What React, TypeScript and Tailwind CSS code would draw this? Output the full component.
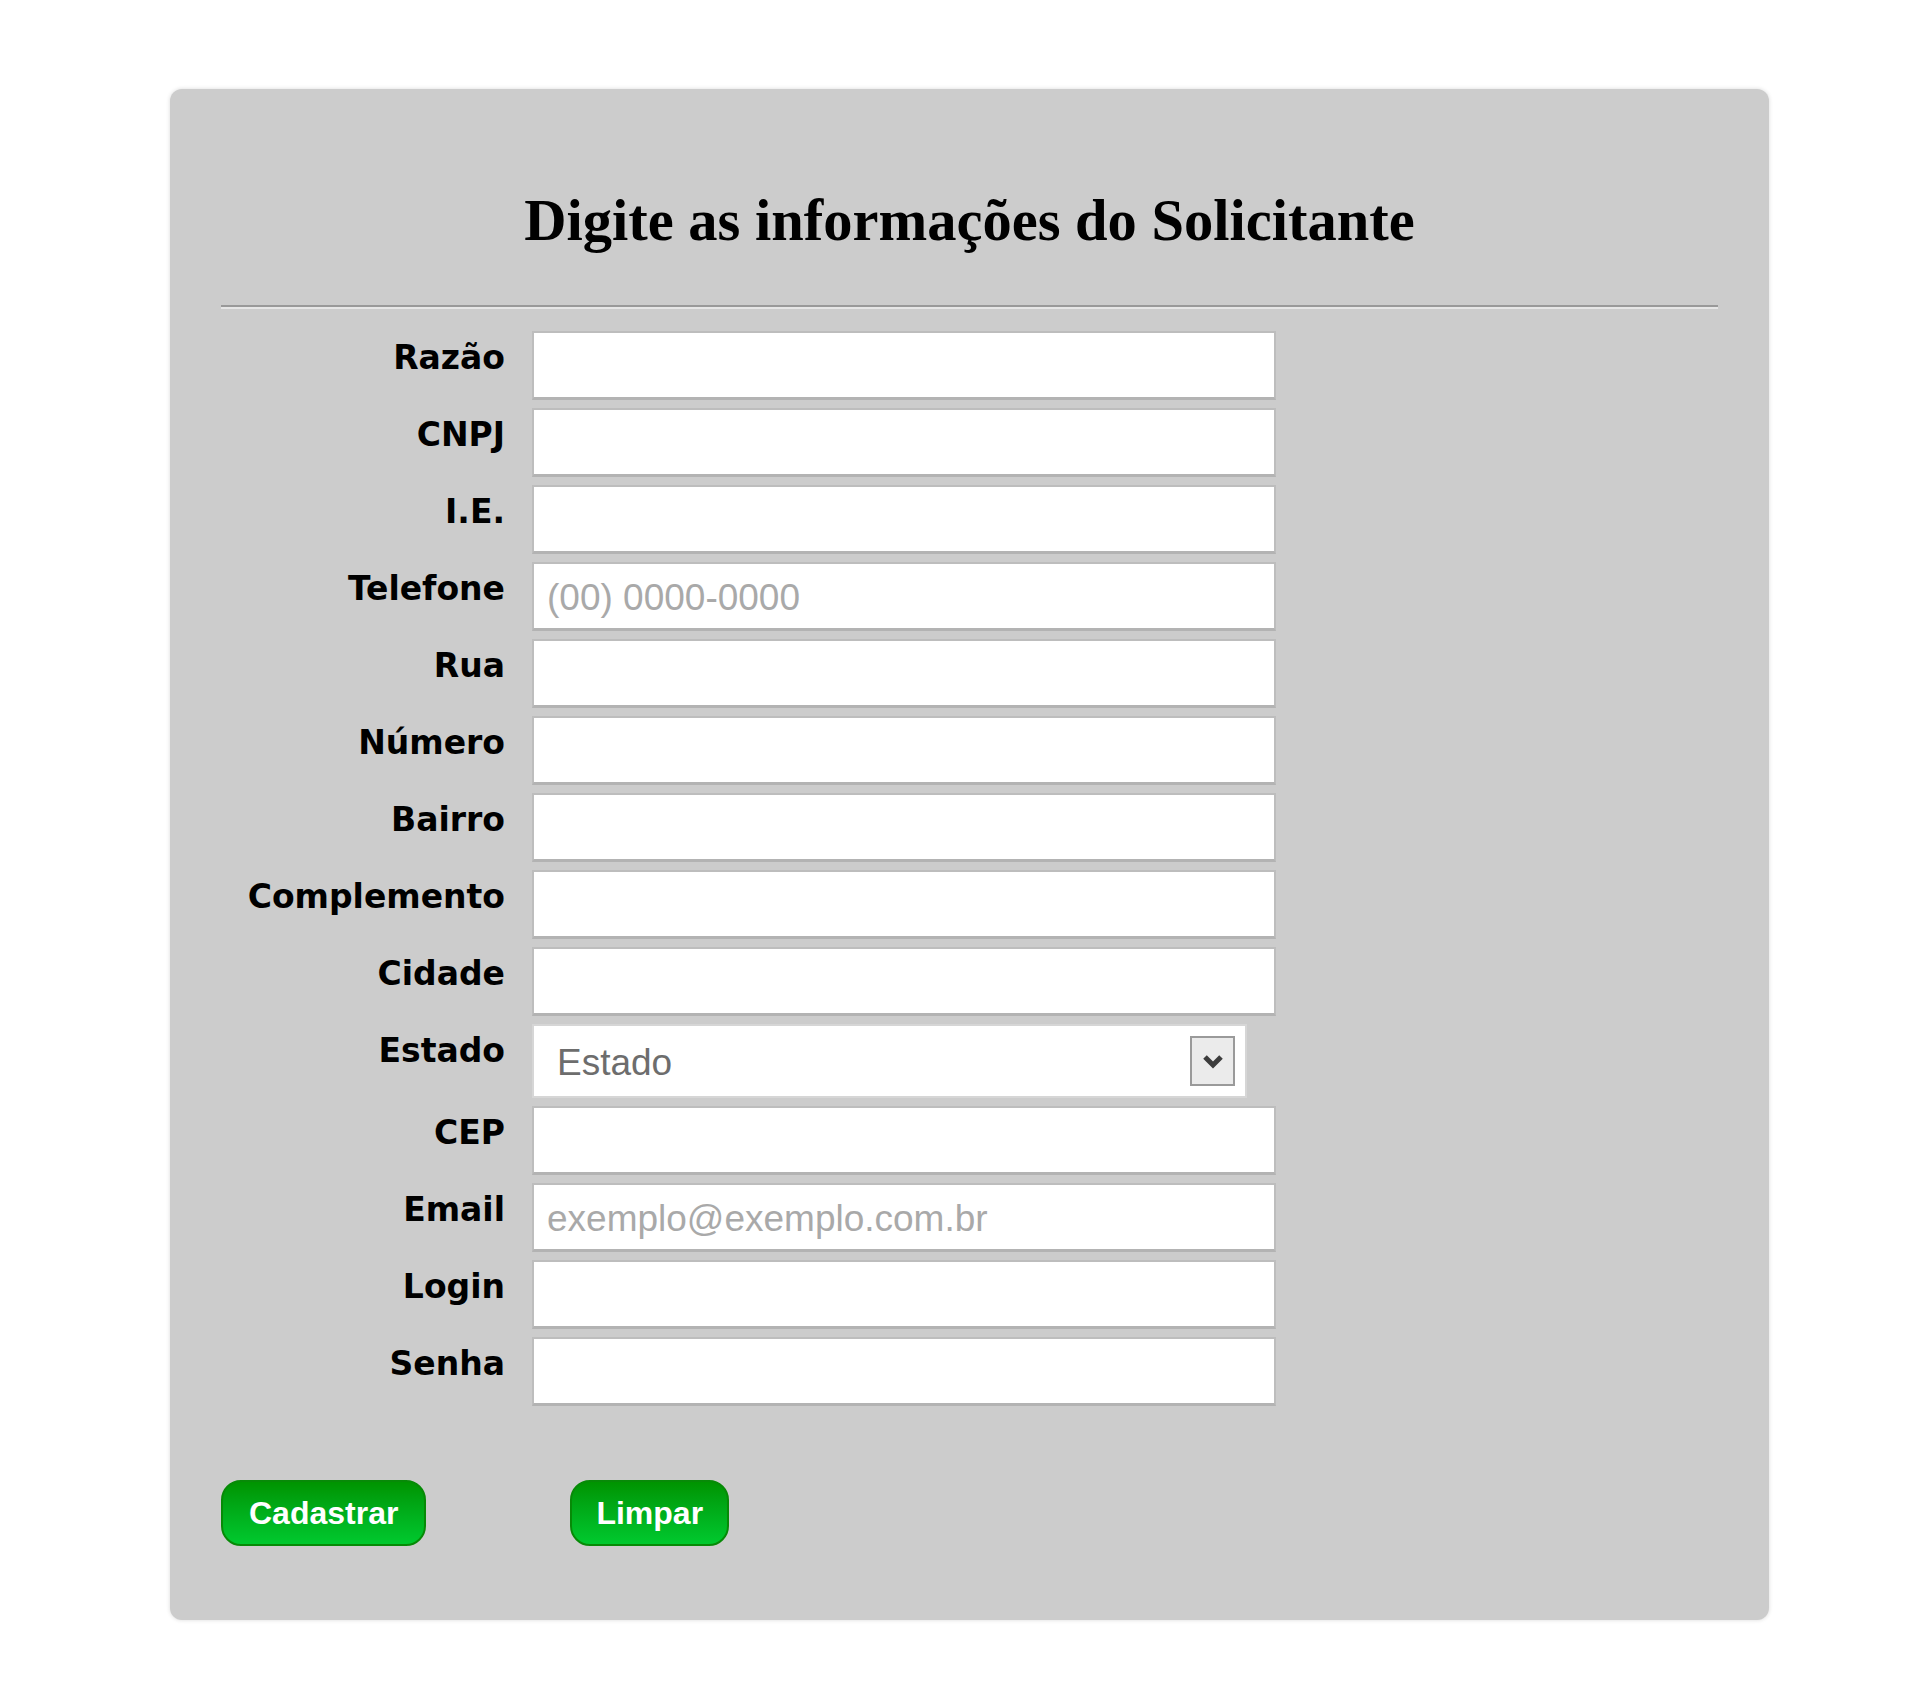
import type { ReactNode } from "react";

const campos = [
  { id: "razao", rotulo: "Razão" },
  { id: "cnpj", rotulo: "CNPJ" },
  { id: "ie", rotulo: "I.E." },
  { id: "telefone", rotulo: "Telefone", placeholder: "(00) 0000-0000" },
  { id: "rua", rotulo: "Rua" },
  { id: "numero", rotulo: "Número" },
  { id: "bairro", rotulo: "Bairro" },
  { id: "complemento", rotulo: "Complemento" },
  { id: "cidade", rotulo: "Cidade" },
];

const camposFinais = [
  { id: "cep", rotulo: "CEP" },
  { id: "email", rotulo: "Email", placeholder: "exemplo@exemplo.com.br" },
  { id: "login", rotulo: "Login" },
  { id: "senha", rotulo: "Senha", type: "password" },
];

function Linha({ id, rotulo, children }: { id: string; rotulo: string; children: ReactNode }) {
  return (
    <div className="flex items-start gap-[27px]">
      <label
        htmlFor={id}
        className="w-[284px] pt-[8px] text-right text-[33px] leading-[38px] font-bold text-black font-['DejaVu_Sans',sans-serif]"
      >
        {rotulo}
      </label>
      {children}
    </div>
  );
}

function Campo({ id, placeholder, type }: { id: string; placeholder?: string; type?: string }) {
  return (
    <input
      id={id}
      type={type ?? "text"}
      placeholder={placeholder}
      className="w-[744px] h-[69px] bg-white border-2 border-[#bdbdbd] border-b-[3px] border-b-[#b3b3b3] pl-[13px] pt-[4px] text-[37px] text-black placeholder:text-[#a9a9a9] font-['Liberation_Sans',Arial,sans-serif] outline-none"
    />
  );
}

export default function App() {
  return (
    <main className="min-h-[1697px] bg-white pt-[89px] pl-[170px]">
      <div className="w-[1599px] bg-[#cccccc] rounded-[12px] shadow-[0_0_4px_rgba(0,0,0,0.15)] pt-[98px] pb-[74px]">
        <h1 className="text-center text-[58.5px] leading-[67px] font-bold text-black font-['Liberation_Serif','Times_New_Roman',serif]">
          Digite as informações do Solicitante
        </h1>

        <hr className="mx-[51px] mt-[51px] h-0 border-0 border-t-2 border-t-[#999999] border-b-2 border-b-[#e6e6e6]" />

        <form className="mt-[22px] pl-[51px]" onSubmit={(e) => e.preventDefault()}>
          <div className="flex flex-col gap-[8px]">
            {campos.map((c) => (
              <Linha key={c.id} id={c.id} rotulo={c.rotulo}>
                <Campo id={c.id} placeholder={c.placeholder} />
              </Linha>
            ))}

            <Linha id="estado" rotulo="Estado">
              <div className="relative w-[715px] h-[74px]">
                <select
                  id="estado"
                  defaultValue=""
                  className="appearance-none w-full h-full bg-white border-2 border-[#d6d6d6] pl-[23px] pt-[3px] text-[37px] text-[#6d6d6d] font-['Liberation_Sans',Arial,sans-serif] outline-none"
                >
                  <option value="">Estado</option>
                </select>
                <span className="pointer-events-none absolute right-[12px] top-[12px] bottom-[12px] w-[45px] bg-[#ebebeb] border-2 border-[#9a9a9a] flex items-center justify-center">
                  <svg width="22" height="16" viewBox="0 0 22 16">
                    <path d="M3 4 L11 12 L19 4" fill="none" stroke="#3c3c3c" strokeWidth="5" />
                  </svg>
                </span>
              </div>
            </Linha>

            {camposFinais.map((c) => (
              <Linha key={c.id} id={c.id} rotulo={c.rotulo}>
                <Campo id={c.id} placeholder={c.placeholder} type={c.type} />
              </Linha>
            ))}
          </div>

          <div className="mt-[74px] flex gap-[144px]">
            <button
              type="submit"
              className="h-[66px] px-[26px] rounded-[20px] border-2 border-[#078a07] bg-gradient-to-b from-[#009400] to-[#00c92e] text-white text-[32px] font-bold font-['Liberation_Sans',Arial,sans-serif]"
            >
              Cadastrar
            </button>
            <button
              type="reset"
              className="h-[66px] px-[24px] rounded-[20px] border-2 border-[#078a07] bg-gradient-to-b from-[#009400] to-[#00c92e] text-white text-[32px] font-bold font-['Liberation_Sans',Arial,sans-serif]"
            >
              Limpar
            </button>
          </div>
        </form>
      </div>
    </main>
  );
}
